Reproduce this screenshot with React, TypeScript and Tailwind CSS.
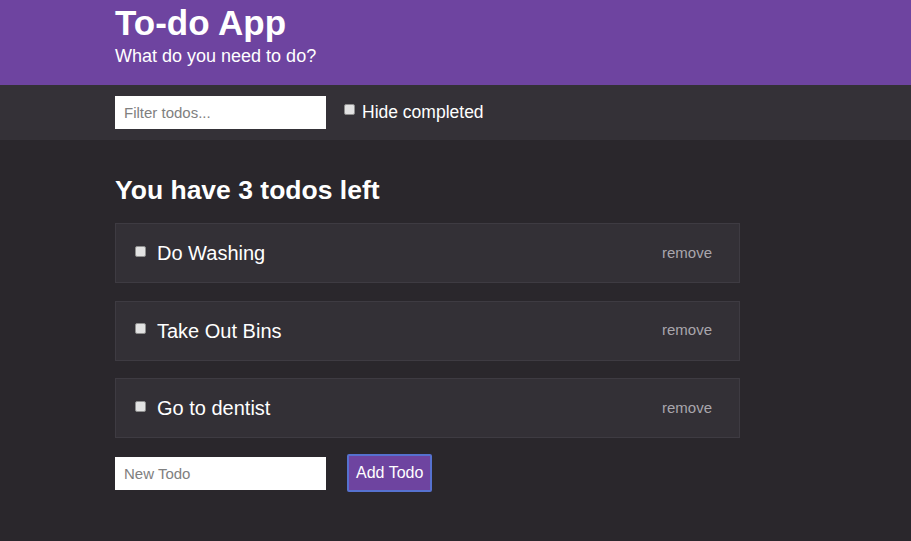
import React from "react";

const Box = () => (
  <span className="inline-block w-[11px] h-[11px] bg-[#e2e2e2] border border-[#8f8f8f] rounded-[2px] shrink-0" />
);

export default function App() {
  const todos = ["Do Washing", "Take Out Bins", "Go to dentist"];
  return (
    <div className="min-h-[541px] bg-[#2a272c] font-['Liberation_Sans',Arial,sans-serif] text-white">
      <header className="bg-[#6e44a0] h-[85px] pl-[115px] pt-[3px]">
        <h1 className="text-[35px] font-bold leading-[40px]">To-do App</h1>
        <p className="text-[18px] leading-[24px] mt-[1px]">What do you need to do?</p>
      </header>
      <div className="bg-[#343137] h-[55px] pl-[115px] flex items-center">
        <input
          className="w-[211px] h-[33px] bg-white text-black px-[9px] text-[15px] outline-none placeholder:text-[#808080]"
          placeholder="Filter todos..."
        />
        <div className="ml-[18px] flex items-center">
          <span className="-mt-[5px]"><Box /></span>
          <span className="ml-[7px] text-[17.5px]">Hide completed</span>
        </div>
      </div>
      <main className="pl-[115px] pt-[35px]">
        <h2 className="text-[26.5px] font-bold leading-[30px]">You have 3 todos left</h2>
        <div className="mt-[18px] flex flex-col gap-[17.5px] w-[625px]">
          {todos.map((t) => (
            <div
              key={t}
              className="h-[60px] bg-[#333036] border border-[#3e3b42] flex items-center pl-[19px] pr-[27px]"
            >
              <span className="-mt-[3px]"><Box /></span>
              <span className="ml-[11px] text-[20px]">{t}</span>
              <span className="ml-auto text-[15px] text-[#a9a6ad]">remove</span>
            </div>
          ))}
        </div>
        <div className="mt-[16px] flex items-center">
          <input
            className="w-[211px] h-[33px] bg-white text-black px-[9px] text-[15px] outline-none placeholder:text-[#808080]"
            placeholder="New Todo"
          />
          <button className="ml-[21px] h-[38px] px-[7px] bg-[#6e44a0] border-2 border-[#5671cf] rounded-[2px] text-[16px] text-white">
            Add Todo
          </button>
        </div>
      </main>
    </div>
  );
}
